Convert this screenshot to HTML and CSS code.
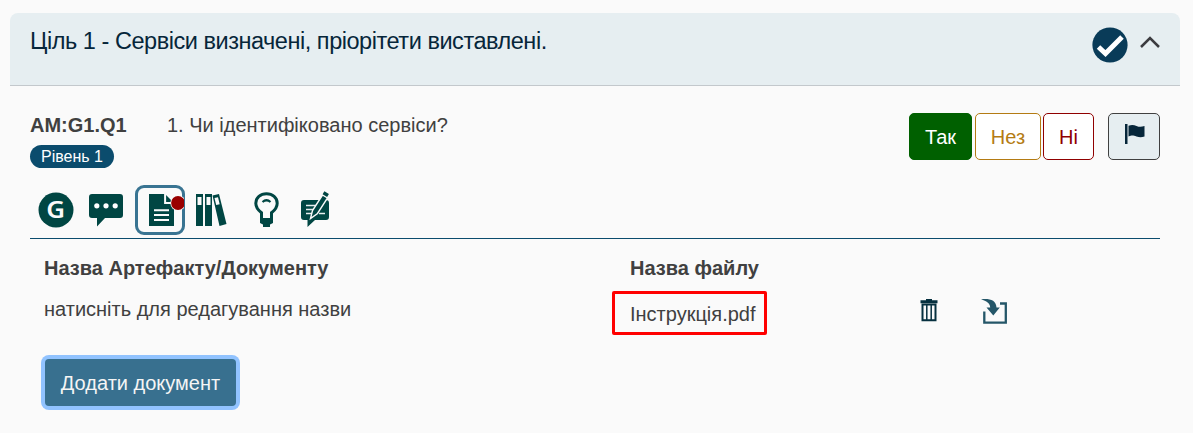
FILE: index.html
```html
<!DOCTYPE html>
<html lang="uk">
<head>
<meta charset="utf-8">
<title>Ціль 1</title>
<link rel="stylesheet" href="styles.css">
</head>
<body>
<main class="panel">
  <header class="goal">
    <h1 class="goal-title">Ціль 1 - Сервіси визначені, пріорітети виставлені.</h1>
    <svg class="goal-check" width="36" height="36" viewBox="0 0 36 36"><circle cx="18" cy="18" r="17.6" fill="#093b58"/><path d="M6.500 20 13.500 26.500 30 10" fill="none" stroke="#fff" stroke-width="5"/></svg>
    <svg class="goal-chevron" width="20" height="12" viewBox="0 0 20 12"><path d="M1 11 10 2l9 9" fill="none" stroke="#3c3c40" stroke-width="2.500"/></svg>
  </header>
  <section class="question">
    <div class="question-row">
      <div class="question-id">
        <strong class="code">AM:G1.Q1</strong>
        <span class="level">Рівень 1</span>
      </div>
      <p class="question-text">1. Чи ідентифіковано сервіси?</p>
      <div class="answers">
        <button class="btn yes">Так</button>
        <button class="btn na">Нез</button>
        <button class="btn no">Ні</button>
        <button class="btn flag" aria-label="Прапорець"><svg width="20" height="21" viewBox="0 0 20 21" fill="#06263a"><path d="M0 0h2.500v20H0zM3.500 1.800C7 .3 9 1 11.500 2c3 1.200 5 1 8 0v10.500c-3 1-5 1-8 0S7 11 3.500 12.500z"/></svg></button>
      </div>
    </div>
    <nav class="tools">
      <span class="tool-guide"><svg width="36" height="36" viewBox="0 0 36 36"><circle cx="18" cy="18" r="17.500" fill="#004643"/></svg><b class="letter">G</b></span>
      <svg class="tool-comment" width="34" height="33" viewBox="0 0 34 33"><path fill="#004643" d="M3 0h28q3 0 3 3v18q0 3-3 3H16l-8 8.500V24H3q-3 0-3-3V3q0-3 3-3z"/><g fill="#fff"><circle cx="7.800" cy="11.800" r="2.600"/><circle cx="17" cy="11.800" r="2.600"/><circle cx="26.200" cy="11.800" r="2.600"/></g></svg>
      <span class="tool-doc"><svg width="35" height="33" viewBox="0 0 35 33"><path fill="#004643" d="M0 0h16l9 9v23H0z"/><path d="M16.100 0v9H25" fill="none" stroke="#fafafa" stroke-width="2"/><path d="M5 16.200h15M5 21h15M5 26h15" stroke="#fafafa" stroke-width="2"/><circle cx="29" cy="9" r="7.700" fill="#fafafa"/><circle cx="29" cy="9" r="6.900" fill="#900"/></svg></span>
      <svg class="tool-books" width="31" height="33" viewBox="0 0 31 33"><g fill="#004643"><path d="M0 0h7v32H0zM9 0h7v32H9zM16.500 1.500 23 0l7.500 30-7 2z"/></g><g fill="#fafafa"><path d="M1.500 3h4v8h-4zM10.500 3h4v8h-4zM18.500 4l3.500-.8 1.700 7-3.500.8z"/></g></svg>
      <svg class="tool-bulb" width="25" height="36" viewBox="0 0 25 36"><path d="M7.500 27v-6.200C4.500 18.500 1.800 16 1.800 11.300 1.800 5.500 6.500 1.800 12.500 1.800s10.700 3.700 10.700 9.500c0 4.700-2.700 7.200-5.700 9.500V27" fill="none" stroke="#004643" stroke-width="3"/><path d="M8.500 10q4-3.500 8 0" fill="none" stroke="#004643" stroke-width="2.200"/><path fill="#004643" d="M6 26h13v5l-3 1.500V35H9v-2.500L6 31z"/></svg>
      <svg class="tool-note" width="29" height="37" viewBox="0 0 29 37"><path fill="#004643" d="M3 9h22q3 0 3 3v14q0 3-3 3H14l-7.500 7V29H3q-3 0-3-3V12q0-3 3-3z"/><path d="M5 14.500h12M5 18.500h9M5 22.500h6M18 22.500h6" stroke="#e8efef" stroke-width="1.600"/><path fill="#004643" stroke="#fafafa" stroke-width="1.400" d="m9.500 27.500 2-8L21.500 4l5 3L16.500 22.500z"/><path d="m22.500 1.800 4.500 2.700" stroke="#004643" stroke-width="3.500"/></svg>
    </nav>
    <div class="files">
      <strong>Назва Артефакту/Документу</strong>
      <strong>Назва файлу</strong>
      <span class="head-space"></span>
      <span class="doc-name">натисніть для редагування назви</span>
      <span class="file-name">Інструкція.pdf</span>
      <div class="file-actions">
        <svg width="18" height="23" viewBox="0 0 18 23"><path fill="#06303f" d="M6 0h6v1.300h5.500v3H.500v-3H6z"/><path d="M2.500 5.500v15.800h13V5.500z" fill="none" stroke="#06303f" stroke-width="2"/><path d="M6.800 6v15M11.200 6v15" stroke="#06303f" stroke-width="1.500"/></svg>
        <svg class="import" width="27" height="26" viewBox="0 0 27 26"><path d="M3.300 12.500v11.200h21.500V4.500H19" fill="none" stroke="#245668" stroke-width="2.300"/><path fill="#245668" d="M0 .300C9-.500 15 1 15.500 8.500h3.300L12.300 16.500 5.500 8.500h3.700C9.200 4.500 5.500 2 0 .300z"/></svg>
      </div>
    </div>
    <button class="add">Додати документ</button>
  </section>
</main>
</body>
</html>
```
FILE: styles.css
```css
* { box-sizing: border-box; }
body {
  margin: 0;
  background: #fafafa;
  color: #404040;
  font: 20px/24px "Liberation Sans", Arial, sans-serif;
}
svg { display: block; flex: none; }
.panel { width: 1170px; margin: 0 0 0 10px; padding-top: 13px; }
.goal {
  display: flex;
  height: 73px;
  padding: 0 20px;
  background: #e6eef1;
  border-bottom: 1px solid #c3c8cc;
  border-radius: 8px 8px 0 0;
}
.goal-title {
  flex: 1;
  margin: 14px 0 0;
  color: #06263a;
  font-size: 23.5px;
  font-weight: 400;
  letter-spacing: -0.46px;
  line-height: 28px;
  white-space: nowrap;
}
.goal-check { margin: 14px 12px 0 0; }
.goal-chevron { margin-top: 23px; }
.question { padding: 27px 20px; }
.question-row { display: flex; height: 72px; }
.question-id { width: 137px; }
.code { display: block; }
.level {
  display: block;
  width: 84px;
  height: 23px;
  margin-top: 8px;
  border-radius: 12px;
  background: #0b4c6d;
  color: #fff;
  font-size: 16px;
  line-height: 23px;
  text-align: center;
}
.question-text { flex: 1; margin: 0; }
.answers { display: flex; }
.btn {
  height: 47px;
  padding: 0;
  border: 1px solid;
  border-radius: 5px;
  background: #fff;
  font: inherit;
}
.yes { width: 63px; margin-right: 3px; border-color: #006000; background: #006000; color: #fff; }
.na { width: 66px; margin-right: 2px; color: #b47b13; }
.no { width: 51px; margin-right: 14px; color: #900000; }
.flag { width: 52px; padding: 0 0 4px 16px; border-color: #404040; background: #e6eef1; }
.tools {
  display: flex;
  align-items: flex-start;
  height: 54px;
  padding-left: 8px;
  border-bottom: 1px solid #0b4c6d;
}
.tool-guide { display: grid; margin: 7px 15px 0 0; place-items: center; }
.tool-guide > * { grid-area: 1 / 1; }
.letter {
  padding-bottom: 2px;
  color: #fafafa;
  font: 600 24px/34px "Noto Sans", sans-serif;
  transform: scaleX(1.08);
}
.tool-comment { margin: 9px 12px 0 0; }
.tool-doc {
  width: 50px;
  height: 50px;
  margin-right: 11px;
  padding: 6px 0 0 11px;
  border: 3px solid #397492;
  border-radius: 9px;
}
.tool-books { margin: 9px 27px 0 0; }
.tool-bulb { margin: 7px 22px 0 0; }
.tool-note { margin-top: 6px; }
.files {
  display: grid;
  grid-template-columns: 568px 290px 1fr;
  grid-template-rows: 24px 56px;
  padding: 17px 0 0 14px;
}
.files strong:nth-child(2) { padding-left: 18px; }
.doc-name { padding-top: 17px; }
.file-name {
  width: 155px;
  height: 44px;
  margin-top: 11px;
  padding-left: 15px;
  border: 3px solid #f00;
  border-radius: 2px;
  line-height: 40px;
}
.file-actions { display: flex; gap: 43px; padding: 19px 0 0 18px; }
.add {
  display: block;
  width: 191px;
  height: 47px;
  margin: 23px 0 0 15px;
  padding: 0;
  border: 0;
  border-radius: 4px;
  box-shadow: 0 0 0 4px #91c3ff;
  background: #38708f;
  color: #f5f5f5;
  font: inherit;
}
```
